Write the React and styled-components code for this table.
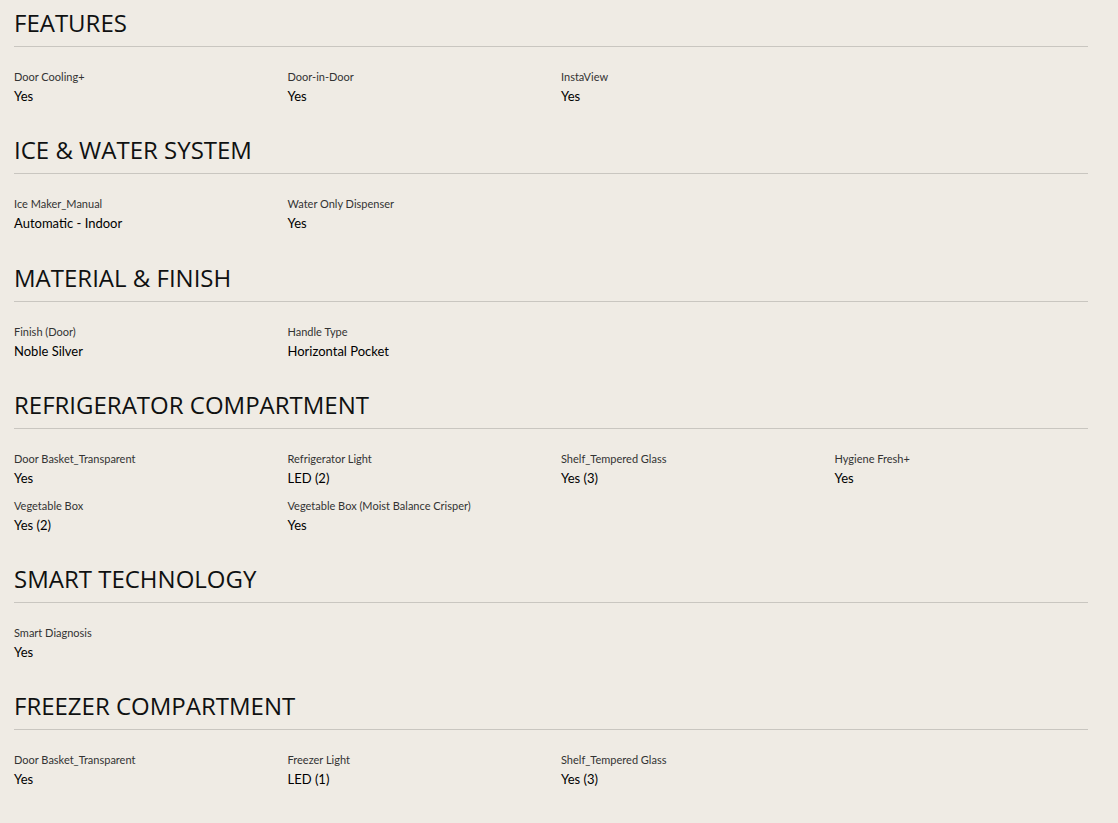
import React from "react";
import styled, { createGlobalStyle } from "styled-components";

const Global = createGlobalStyle`
  html, body { margin: 0; padding: 0; background: #efebe4; }
  body { font-family: "Open Sans", "Noto Sans", sans-serif; color: #0f1111; }
`;

const Page = styled.main`
  width: 1074px;
  padding: 7px 0 20px 14px;
  display: flex;
  flex-direction: column;
  gap: 28.3px;
`;

const Section = styled.section`
  display: flex;
  flex-direction: column;
`;

const Heading = styled.h2`
  margin: 0;
  font-size: 24px;
  line-height: 32px;
  font-weight: 400;
  color: #0f1111;
  padding-bottom: 7px;
  border-bottom: 1px solid #c9c6c0;
`;

const Grid = styled.div`
  margin-top: 22px;
  display: grid;
  grid-template-columns: repeat(4, 1fr);
  column-gap: 20px;
  row-gap: 10px;
`;

const Item = styled.div`
  display: flex;
  flex-direction: column;
`;

const Label = styled.span`
  font-family: "Lato", "Open Sans", sans-serif;
  font-size: 11px;
  line-height: 16px;
  color: #333;
`;

const Value = styled.span`
  font-family: "Lato", "Open Sans", sans-serif;
  font-size: 13px;
  line-height: 20px;
  margin-top: 1px;
  color: #000;
`;

const sections = [
  {
    title: "FEATURES",
    items: [
      ["Door Cooling+", "Yes"],
      ["Door-in-Door", "Yes"],
      ["InstaView", "Yes"],
    ],
  },
  {
    title: "ICE & WATER SYSTEM",
    items: [
      ["Ice Maker_Manual", "Automatic - Indoor"],
      ["Water Only Dispenser", "Yes"],
    ],
  },
  {
    title: "MATERIAL & FINISH",
    items: [
      ["Finish (Door)", "Noble Silver"],
      ["Handle Type", "Horizontal Pocket"],
    ],
  },
  {
    title: "REFRIGERATOR COMPARTMENT",
    items: [
      ["Door Basket_Transparent", "Yes"],
      ["Refrigerator Light", "LED (2)"],
      ["Shelf_Tempered Glass", "Yes (3)"],
      ["Hygiene Fresh+", "Yes"],
      ["Vegetable Box", "Yes (2)"],
      ["Vegetable Box (Moist Balance Crisper)", "Yes"],
    ],
  },
  {
    title: "SMART TECHNOLOGY",
    items: [["Smart Diagnosis", "Yes"]],
  },
  {
    title: "FREEZER COMPARTMENT",
    items: [
      ["Door Basket_Transparent", "Yes"],
      ["Freezer Light", "LED (1)"],
      ["Shelf_Tempered Glass", "Yes (3)"],
    ],
  },
];

export default function App() {
  return (
    <>
      <Global />
      <Page>
        {sections.map((s) => (
          <Section key={s.title}>
            <Heading>{s.title}</Heading>
            <Grid>
              {s.items.map(([l, v], i) => (
                <Item key={i}>
                  <Label>{l}</Label>
                  <Value>{v}</Value>
                </Item>
              ))}
            </Grid>
          </Section>
        ))}
      </Page>
    </>
  );
}
